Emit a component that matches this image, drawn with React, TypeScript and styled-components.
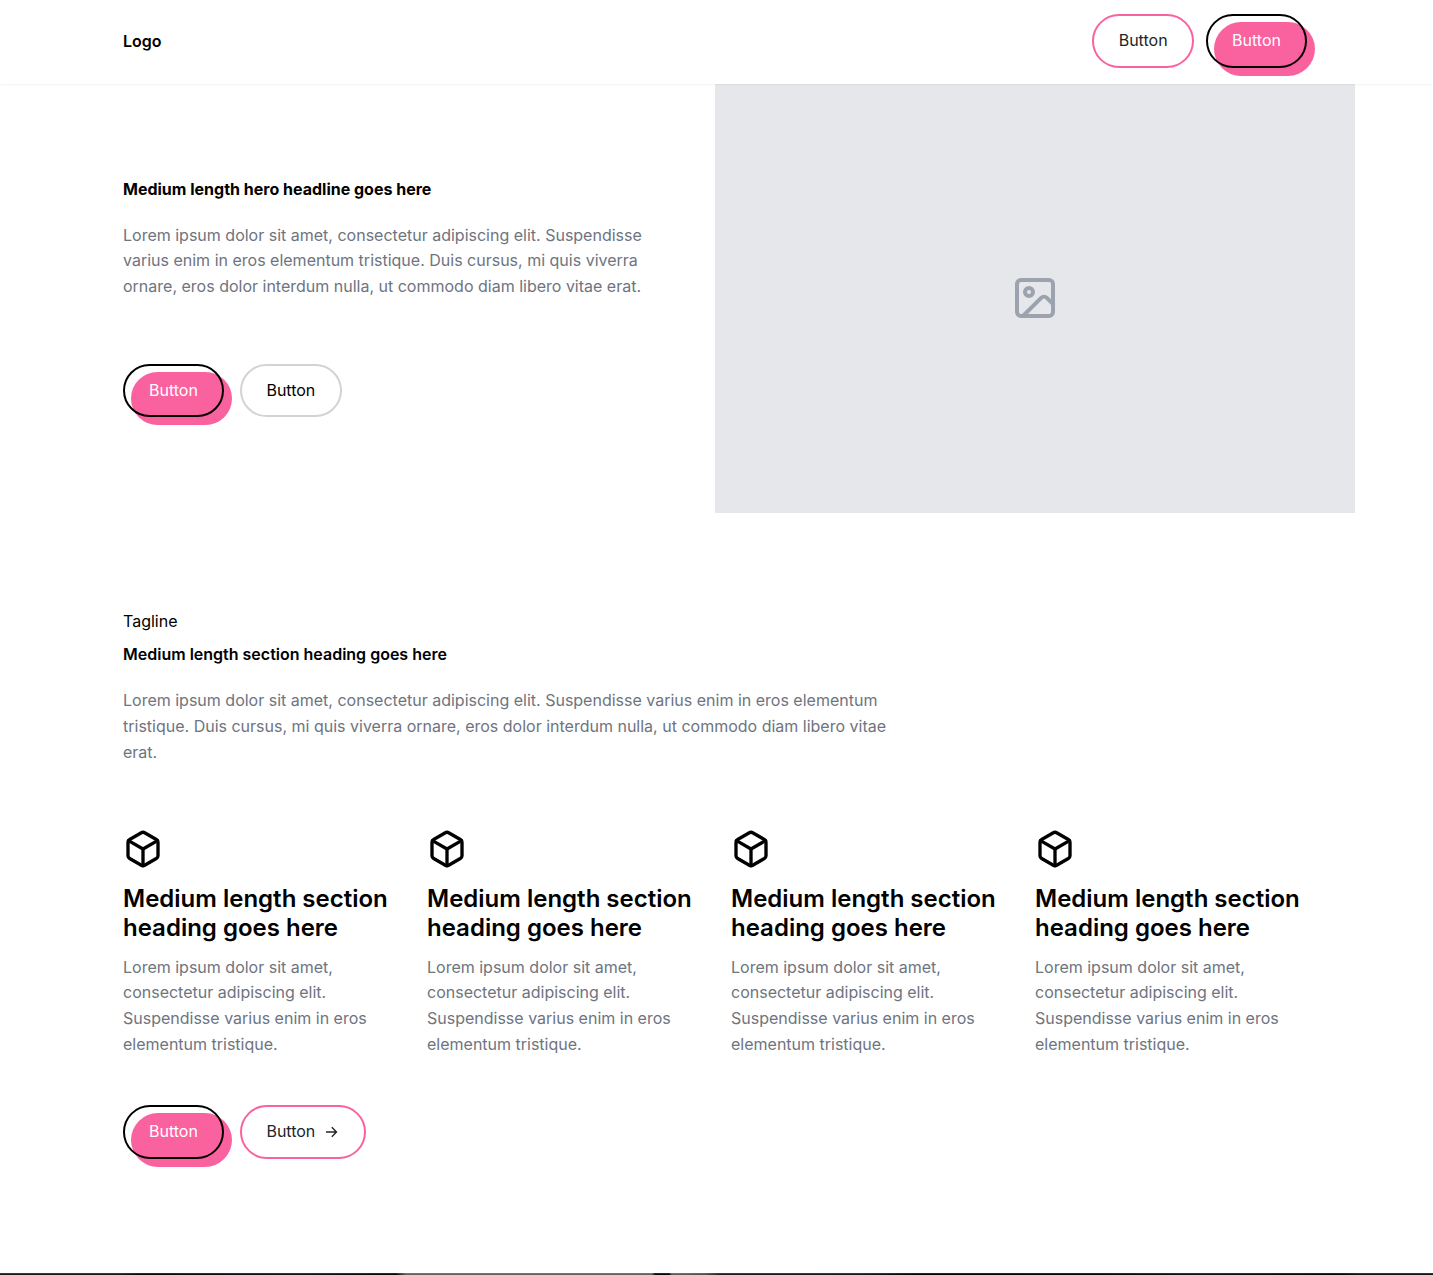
import React from "react";
import styled, { createGlobalStyle, css } from "styled-components";
import { Box, Image } from "lucide-react";

const Global = createGlobalStyle`
  * { box-sizing: border-box; }
  html, body { margin: 0; padding: 0; background: #fff; overflow: hidden; }
  body { font-family: Inter, "Liberation Sans", sans-serif; font-size: 16px; line-height: 25.6px; color: #000; }
  h1, h2, h3, p { margin: 0; }
`;

const Page = styled.div`
  width: 100%;
  height: 1275px;
  display: flex;
  flex-direction: column;
  overflow: hidden;
`;

const Header = styled.header`
  position: relative;
  z-index: 1;
  flex: none;
  height: 84px;
  background: #fff;
  box-shadow: 0 1px 2px rgba(0, 0, 0, 0.05);
`;

const Container = styled.div`
  width: 1280px;
  margin-left: 75px;
  padding: 0 48px;
`;

const HeaderRow = styled(Container)`
  display: flex;
  justify-content: space-between;
  align-items: flex-start;
  padding-top: 14px;
`;

const Logo = styled.div`
  font-weight: 600;
  padding-top: 15px;
`;

const ButtonRow = styled.div<{ $gap?: number }>`
  display: flex;
  isolation: isolate;
  gap: ${(p) => p.$gap ?? 16}px;
`;

type Variant = "primary" | "pink" | "gray";

const Button = styled.button<{ $variant: Variant }>`
  position: relative;
  display: inline-flex;
  align-items: center;
  gap: 8px;
  padding: 12px 24px;
  font: inherit;
  background: transparent;
  border-radius: 27px;
  border: 2px solid #000;
  white-space: nowrap;
  ${(p) =>
    p.$variant === "primary" &&
    css`
      color: #fff;
      &::before {
        content: "";
        position: absolute;
        z-index: -1;
        top: 6px;
        left: 6px;
        right: -10px;
        bottom: -10px;
        border-radius: 27px;
        background: #fa629f;
      }
    `}
  ${(p) =>
    p.$variant === "pink" &&
    css`
      padding: 12px 24.5px;
      color: #222428;
      border-color: #fa629f;
    `}
  ${(p) =>
    p.$variant === "gray" &&
    css`
      padding: 12px 24.5px;
      color: #000;
      border-color: #d6d1d4;
    `}
`;

const Hero = styled.section`
  display: grid;
  grid-template-columns: 544px 640px;
  column-gap: 48px;
  flex: none;
  height: 429px;
  margin-left: 123px;
`;

const HeroCopy = styled.div`
  padding-top: 93px;
`;

const Placeholder = styled.div`
  display: flex;
  align-items: center;
  justify-content: center;
  padding-bottom: 1px;
  background: #e5e7eb;
  color: #9ca3af;
`;

const SmallHeading = styled.h2<{ $weight: number; $space?: number }>`
  font-size: 16px;
  font-weight: ${(p) => p.$weight};
  margin-bottom: ${(p) => p.$space ?? 20}px;
`;

const Text = styled.p`
  color: #6e7480;
`;

const HeroActions = styled(ButtonRow)`
  margin-top: 64.4px;
`;

const Features = styled(Container)`
  flex: 1;
  padding-top: 96px;
`;

const Tagline = styled.p`
  margin-bottom: 7.4px;
`;

const Intro = styled.div`
  width: 768px;
  margin-bottom: 64px;
`;

const Grid = styled.div`
  display: grid;
  grid-template-columns: repeat(4, 1fr);
  gap: 32px;
  margin-bottom: 48px;
`;

const Card = styled.article`
  svg { display: block; }
`;

const CardTitle = styled.h3`
  font-size: 24px;
  line-height: 28.8px;
  font-weight: 600;
  margin: 16px 0 12px;
`;

const PhotoEdge = styled.div`
  flex: none;
  height: 2px;
  background:
    linear-gradient(rgba(255, 255, 255, 0.12) 50%, transparent 50%),
    linear-gradient(90deg, #1b1b1c 0, #1b1b1c 120px, #0a0a0b 140px, #17151a 300px, #09080a 396px,
      #65615b 406px, #65615b 652px, #080808 655px, #080808 669px, #65605c 672px, #554d4b 705px,
      #241c22 720px, #1b1a20 860px, #050505 920px, #080808 1100px, #151318 1200px, #060606 1340px, #17161a 1360px, #17161a);
`;

const features = [0, 1, 2, 3];

export default function App() {
  return (
    <Page>
      <Global />
      <Header>
        <HeaderRow>
          <Logo>Logo</Logo>
          <ButtonRow $gap={12}>
            <Button $variant="pink">Button</Button>
            <Button $variant="primary">Button</Button>
          </ButtonRow>
        </HeaderRow>
      </Header>
      <Hero>
        <HeroCopy>
          <SmallHeading as="h1" $weight={700}>Medium length hero headline goes here</SmallHeading>
          <Text>
            Lorem ipsum dolor sit amet, consectetur adipiscing elit. Suspendisse varius enim in eros
            elementum tristique. Duis cursus, mi quis viverra ornare, eros dolor interdum nulla, ut
            commodo diam libero vitae erat.
          </Text>
          <HeroActions>
            <Button $variant="primary">Button</Button>
            <Button $variant="gray">Button</Button>
          </HeroActions>
        </HeroCopy>
        <Placeholder>
          <Image size={48} />
        </Placeholder>
      </Hero>
      <Features as="section">
        <Intro>
          <Tagline>Tagline</Tagline>
          <SmallHeading $weight={600} $space={20.8}>Medium length section heading goes here</SmallHeading>
          <Text>
            Lorem ipsum dolor sit amet, consectetur adipiscing elit. Suspendisse varius enim in eros
            elementum tristique. Duis cursus, mi quis viverra ornare, eros dolor interdum nulla, ut
            commodo diam libero vitae erat.
          </Text>
        </Intro>
        <Grid>
          {features.map((i) => (
            <Card key={i}>
              <Box size={40} />
              <CardTitle>Medium length section heading goes here</CardTitle>
              <Text>
                Lorem ipsum dolor sit amet, consectetur adipiscing elit. Suspendisse varius enim in
                eros elementum tristique.
              </Text>
            </Card>
          ))}
        </Grid>
        <ButtonRow>
          <Button $variant="primary">Button</Button>
          <Button $variant="pink">
            Button
            <svg width="16" height="16" viewBox="0 0 16 16" fill="none" stroke="currentColor" strokeWidth="1.4">
              <path d="M3 8H13.4M8.8 3.3L13.5 8L8.8 12.7" />
            </svg>
          </Button>
        </ButtonRow>
      </Features>
      <PhotoEdge />
    </Page>
  );
}
